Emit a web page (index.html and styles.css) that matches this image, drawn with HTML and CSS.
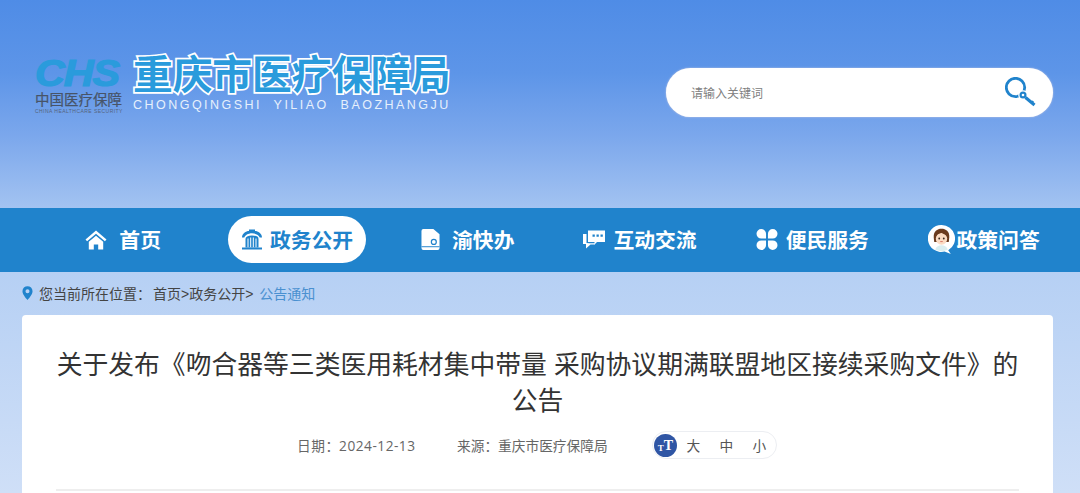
FILE: index.html
```html
<!DOCTYPE html>
<html lang="zh-CN">
<head>
<meta charset="utf-8">
<title>重庆市医疗保障局</title>
<link rel="stylesheet" href="styles.css">
</head>
<body>
<header class="masthead">
  <div class="brand">
    <div class="emblem">
      <div class="chs">CHS</div>
      <div class="emblem-cn">中国医疗保障</div>
      <div class="emblem-en">CHINA HEALTHCARE SECURITY</div>
    </div>
    <div class="brand-text">
      <div class="brand-name">重庆市医疗保障局</div>
      <div class="brand-pinyin">CHONGQINGSHI&nbsp; YILIAO&nbsp; BAOZHANGJU</div>
    </div>
  </div>
  <div class="search">
    <span class="search-hint">请输入关键词</span>
    <svg class="search-icon" viewBox="0 0 32 32" aria-hidden="true">
      <circle cx="10.500" cy="10.500" r="9.200" fill="none" stroke="#2083cc" stroke-width="2.800"/>
      <circle cx="18" cy="18" r="4.800" fill="#fff"/>
      <circle cx="18" cy="18" r="3.500" fill="#2083cc"/>
      <circle cx="18" cy="18" r="1.300" fill="#fff"/>
      <path d="M20.500 20.500L29.500 28" stroke="#2083cc" stroke-width="3.200" fill="none"/>
      <path d="M25 25.500l2.500-2 1.500 1.300-2.500 2z" fill="#2083cc"/>
    </svg>
  </div>
</header>
<nav class="nav">
  <a class="nav-item wide">
    <svg class="nav-icon" viewBox="0 0 22 20"><path d="M11 1L0.500 10l1.600 1.800L11 4.200l8.900 7.600 1.600-1.800z" fill="#fff"/><path d="M11 6.200L3.800 12.300V20h5v-5h4.400v5h5v-7.700z" fill="#fff"/></svg>
    <span>首页</span>
  </a>
  <a class="nav-item active">
    <svg class="nav-icon" viewBox="0 0 22 20"><path d="M1 8C1 4 5 1.500 8 1.500V0h6v1.500C17 1.500 21 4 21 8h-2.300C18 6 15 3.800 11 3.800S4 6 3.300 8z" fill="#2083cc"/><path d="M4.500 9.500Q4.500 6 11 6t6.500 3.500V18h-13z" fill="#2083cc"/><path d="M7 9v9M9.700 8v10M12.300 8v10M15 9v9" stroke="#fff" stroke-width="1"/><path d="M1 18h20v2H1z" fill="#2083cc"/></svg>
    <span>政务公开</span>
  </a>
  <a class="nav-item wide">
    <svg class="nav-icon doc" viewBox="0 0 20 22"><path d="M2.500 0H13l6.500 5.500V20a2 2 0 0 1-2 2H2.500A2 2 0 0 1 .5 20V2a2 2 0 0 1 2-2z" fill="#fff"/><circle cx="13.500" cy="13.500" r="2.600" fill="none" stroke="#2083cc" stroke-width="1.300"/><path d="M.5 18.600h19" stroke="#2083cc" stroke-width="1"/></svg>
    <span>渝快办</span>
  </a>
  <a class="nav-item">
    <svg class="nav-icon" viewBox="0 0 22 20"><path d="M5 1h17v11.500h-8l-2.500 2.500V12.500H5z" fill="#fff"/><path d="M3.500 4.500H0v10h3v4.500l4.500-4h4.500v-1.200H6.500l-3-0.300z" fill="#fff"/><path d="M9.500 5h2.300v2.300H9.500zM13.500 5h2.300v2.300h-2.300zM17.500 5h2.300v2.300h-2.300z" fill="#2083cc"/></svg>
    <span>互动交流</span>
  </a>
  <a class="nav-item">
    <svg class="nav-icon" viewBox="0 0 22 22"><path d="M10 10H5a5 5 0 1 1 5-5zM12 10V5a5 5 0 1 1 5 5zM10 12v5a5 5 0 1 1-5-5zM12 12h5a5 5 0 1 1-5 5z" fill="#fff"/></svg>
    <span>便民服务</span>
  </a>
  <a class="nav-item snug">
    <svg class="nav-avatar" viewBox="0 0 26 28">
      <path d="M13 0a13 13 0 0 1 6.500 24.300L22 28l-6-2.400A13 13 0 1 1 13 0z" fill="#fff"/>
      <path d="M5.500 12C5 6 9 3.500 13 3.500S21 6 20.500 12l-.5 4.500H6z" fill="#6b3c1f"/>
      <ellipse cx="13" cy="13.300" rx="5.500" ry="5.800" fill="#fbdcc4"/>
      <path d="M7.500 11.500C9 8 12 8.500 13 7.500c1.500 1.500 4 1 5.500 4C18 7 15 6 13 6S8 7 7.500 11.500z" fill="#6b3c1f"/>
      <circle cx="10.800" cy="13" r=".9" fill="#3a2a20"/><circle cx="15.200" cy="13" r=".9" fill="#3a2a20"/>
      <path d="M11.800 16h2.400" stroke="#d1665a" stroke-width=".8"/>
      <path d="M7 24c.5-3 3-4.500 6-4.500s5.500 1.500 6 4.500l-6 1.500z" fill="#dbeef0"/>
    </svg>
    <span>政策问答</span>
  </a>
</nav>
<main class="page">
  <div class="crumbs">
    <svg class="pin" viewBox="0 0 12 15"><path fill-rule="evenodd" d="M6 0a5.500 5.500 0 0 1 5.500 5.500C11.500 9.500 6 15 6 15S.5 9.500.5 5.500A5.500 5.500 0 0 1 6 0zm0 3.300a2.200 2.200 0 1 0 0 4.400 2.200 2.200 0 0 0 0-4.400z" fill="#2083cc"/></svg>
    <span>您当前所在位置<span class="colon">：</span></span>
    <span class="crumb-trail">首页&gt;政务公开&gt;</span>
    <span class="crumb-current">公告通知</span>
  </div>
  <article class="card">
    <h1 class="title">关于发布《吻合器等三类医用耗材集中带量 采购协议期满联盟地区接续采购文件》的公告</h1>
    <div class="meta">
      <span class="meta-date">日期<span class="colon">：</span>2024-12-13</span>
      <span class="meta-source">来源<span class="colon">：</span>重庆市医疗保障局</span>
      <div class="sizes">
        <span class="sizes-badge"><span class="t-small">T</span><span class="t-big">T</span></span>
        <span class="size">大</span>
        <span class="size">中</span>
        <span class="size">小</span>
      </div>
    </div>
    <hr class="rule">
  </article>
</main>
</body>
</html>
```
FILE: styles.css
```css
* { box-sizing: border-box; }
html, body { margin: 0; height: 493px; overflow: hidden; }
body {
  font-family: "Liberation Sans", "Noto Sans CJK SC", sans-serif;
  background: #cfdff7;
  color: #333;
}
.colon { font-family: "Noto Sans CJK TC", sans-serif; }
.masthead {
  height: 208px;
  background: linear-gradient(180deg, #4f8ce6 0%, #5d95e8 35%, #7ba7ec 65%, #a3c3f1 100%);
  display: flex;
  justify-content: space-between;
  align-items: flex-start;
  padding: 51px 27px 0 35px;
}
.brand { display: flex; align-items: flex-start; gap: 9px; }
.emblem { width: 89px; padding-top: 9px; }
.chs {
  font: italic 700 26px/29px "Liberation Sans", sans-serif;
  color: #2a9bdc;
  -webkit-text-stroke: .9px #2a9bdc;
  letter-spacing: -.7px;
  transform: scale(1.590, 1.385);
  transform-origin: left center;
  white-space: nowrap;
}
.emblem-cn {
  font-size: 14.500px;
  line-height: 18px;
  margin-top: 2px;
  color: #475468;
  -webkit-text-stroke: .2px #475468;
  white-space: nowrap;
}
.emblem-en {
  font-size: 5px;
  line-height: 5px;
  color: #55647c;
  letter-spacing: .45px;
  white-space: nowrap;
}
.brand-text { padding-top: 1px; }
.brand-name {
  font-size: 39.700px;
  line-height: 46px;
  font-weight: 700;
  color: #2a9bdc;
  -webkit-text-stroke: 3.500px #fff;
  paint-order: stroke fill;
  white-space: nowrap;
}
.brand-pinyin {
  font-size: 12.500px;
  line-height: 14px;
  color: #e6f0fc;
  letter-spacing: 2.470px;
  white-space: nowrap;
}
.search {
  width: 387px;
  height: 49px;
  margin-top: 17px;
  background: #fff;
  border-radius: 25px;
  box-shadow: 0 0 2px #c8cbe0;
  display: flex;
  align-items: center;
  justify-content: space-between;
  padding: 0 16px 0 25px;
}
.search-hint { font-size: 12px; color: #808080; }
.search-icon { width: 32px; height: 32px; }
.nav {
  height: 64px;
  background: #2083cc;
  display: grid;
  grid-template-columns: repeat(6, 172.300px);
  justify-items: center;
  align-items: start;
  padding: 8px 0 0 37px;
}
.nav-item {
  display: flex;
  align-items: center;
  gap: 8px;
  height: 47px;
  padding-bottom: 1px;
  font-size: 20.800px;
  font-weight: 700;
  color: #fff;
  white-space: nowrap;
}
.nav-item.wide { gap: 12px; }
.nav-item.snug { gap: 2px; margin-left: -2px; }
.nav-item.active {
  background: #fff;
  color: #2083cc;
  width: 138px;
  padding: 0 13px 1px;
  gap: 7px;
  border-radius: 24px;
  margin-left: 3px;
}
.nav-icon { width: 22px; height: 21px; flex: none; }
.nav-icon.doc { width: 19px; }
.nav-avatar { width: 27px; height: 29px; flex: none; }
.page {
  height: 221px;
  background: linear-gradient(180deg, #b6d0f4 0%, #cfdff7 100%);
  padding: 0 27px 0 22px;
}
.crumbs {
  height: 43px;
  padding-bottom: 1px;
  display: flex;
  align-items: center;
  font-size: 14px;
  color: #444;
  white-space: nowrap;
}
.pin { width: 11px; height: 14px; margin-right: 6px; }
.crumb-trail { margin-left: 2px; }
.crumb-current { margin-left: 6px; color: #4a90d0; }
.card {
  height: 178px;
  background: #fff;
  border-radius: 4px 4px 0 0;
  padding: 32px 34px 0;
}
.title {
  margin: 0;
  font-size: 25.800px;
  line-height: 36px;
  font-weight: 400;
  text-align: center;
  color: #333;
}
.meta {
  display: flex;
  align-items: center;
  height: 28px;
  margin-top: 12px;
  padding-left: 241px;
  font-size: 13.700px;
  color: #666;
  white-space: nowrap;
}
.meta-date { width: 160px; font-family: "Open Sans", "Noto Sans CJK SC", sans-serif; letter-spacing: .5px; }
.meta-date .colon { letter-spacing: 0; }
.meta-source { width: 195px; }
.sizes {
  display: flex;
  align-items: center;
  width: 125px;
  height: 28px;
  border: 1px solid #eceef2;
  border-radius: 14px;
  padding-left: 1px;
  font-size: 13.700px;
  color: #555;
}
.sizes-badge {
  width: 23px;
  height: 23px;
  border-radius: 50%;
  background: #2f55a4;
  color: #fff;
  font-family: "Liberation Serif", serif;
  font-weight: 700;
  display: flex;
  align-items: flex-end;
  justify-content: center;
  padding-bottom: 4px;
  line-height: 1;
}
.t-small { font-size: 9px; }
.t-big { font-size: 14px; }
.size { width: 33.500px; text-align: center; }
.rule {
  margin: 30px 0 0;
  border: 0;
  border-top: 2px solid #eeeeee;
}
```
